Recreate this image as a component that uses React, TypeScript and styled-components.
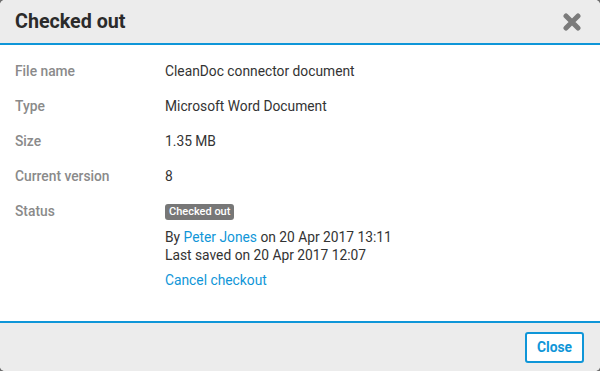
import React from 'react';
import styled, { createGlobalStyle } from 'styled-components';

const Colors = {
    blue: '#0f96d8',
    panel: '#ececec',
    label: '#8a8a8a',
    text: '#333',
    badge: '#777',
};

const GlobalStyle = createGlobalStyle`
    html, body {
        margin: 0;
        padding: 0;
        background: #6e6e6e;
    }
    body {
        font-family: Roboto, "Noto Sans", sans-serif;
    }
`;

const Dialog = styled.div`
    width: 600px;
    height: 371px;
    background: #fff;
    border-radius: 5px;
    overflow: hidden;
    display: flex;
    flex-direction: column;
`;

const Header = styled.div`
    height: 43px;
    flex: none;
    background: ${Colors.panel};
    border-bottom: 2px solid ${Colors.blue};
    display: flex;
    align-items: center;
    justify-content: space-between;
    padding: 0 15px;
    box-sizing: content-box;
`;

const Title = styled.h1`
    margin: 0;
    font-size: 19.7px;
    font-weight: 700;
    color: #2b2b2b;
`;

const CloseX = styled.button`
    background: none;
    border: none;
    padding: 0;
    margin-right: 2px;
    width: 22px;
    height: 22px;
    cursor: pointer;
    display: flex;
    align-items: center;
    justify-content: center;
`;

const Body = styled.div`
    flex: 1;
    padding: 18px 15px 0;
    display: grid;
    grid-template-columns: 150px 1fr;
    grid-auto-rows: min-content;
    row-gap: 19px;
    font-size: 13.8px;
    line-height: 16px;
`;

const Label = styled.div`
    color: ${Colors.label};
    font-weight: 500;
`;

const Value = styled.div`
    color: ${Colors.text};
`;

const StatusBlock = styled.div`
    display: flex;
    flex-direction: column;
    align-items: flex-start;
    color: ${Colors.text};
    margin-top: 1px;
`;

const Badge = styled.span`
    background: ${Colors.badge};
    color: #fff;
    font-size: 11px;
    font-weight: 500;
    line-height: 16px;
    padding: 0 4px;
    border-radius: 3px;
    margin-bottom: 8px;
`;

const Line = styled.div`
    line-height: 18px;
`;

const LinkText = styled.a<{ $spaced?: boolean }>`
    color: ${Colors.blue};
    text-decoration: none;
    cursor: pointer;
    ${p => p.$spaced && 'margin-top: 8px;'}
`;

const Footer = styled.div`
    height: 48px;
    flex: none;
    background: ${Colors.panel};
    border-top: 2px solid ${Colors.blue};
    display: flex;
    align-items: center;
    justify-content: flex-end;
    padding: 0 16px;
`;

const Button = styled.button`
    background: #fff;
    border: 2px solid ${Colors.blue};
    border-radius: 3px;
    color: ${Colors.blue};
    font-family: inherit;
    font-size: 13.8px;
    font-weight: 700;
    height: 31px;
    padding: 0 10px;
    margin-top: 0;
    cursor: pointer;
`;

const rows: [string, string][] = [
    ['File name', 'CleanDoc connector document'],
    ['Type', 'Microsoft Word Document'],
    ['Size', '1.35 MB'],
    ['Current version', '8'],
];

export default function App() {
    return (
        <>
            <GlobalStyle />
            <Dialog>
                <Header>
                    <Title>Checked out</Title>
                    <CloseX aria-label="Close">
                        <svg width="18" height="18" viewBox="0 0 18 18">
                            <path d="M3 3 L15 15 M15 3 L3 15" stroke="#7b7b7b" strokeWidth="5" strokeLinecap="round" />
                        </svg>
                    </CloseX>
                </Header>
                <Body>
                    {rows.map(([label, value]) => (
                        <React.Fragment key={label}>
                            <Label>{label}</Label>
                            <Value>{value}</Value>
                        </React.Fragment>
                    ))}
                    <Label>Status</Label>
                    <StatusBlock>
                        <Badge>Checked out</Badge>
                        <Line>By <LinkText>Peter Jones</LinkText> on 20 Apr 2017 13:11</Line>
                        <Line>Last saved on 20 Apr 2017 12:07</Line>
                        <LinkText $spaced>Cancel checkout</LinkText>
                    </StatusBlock>
                </Body>
                <Footer>
                    <Button>Close</Button>
                </Footer>
            </Dialog>
        </>
    );
}
